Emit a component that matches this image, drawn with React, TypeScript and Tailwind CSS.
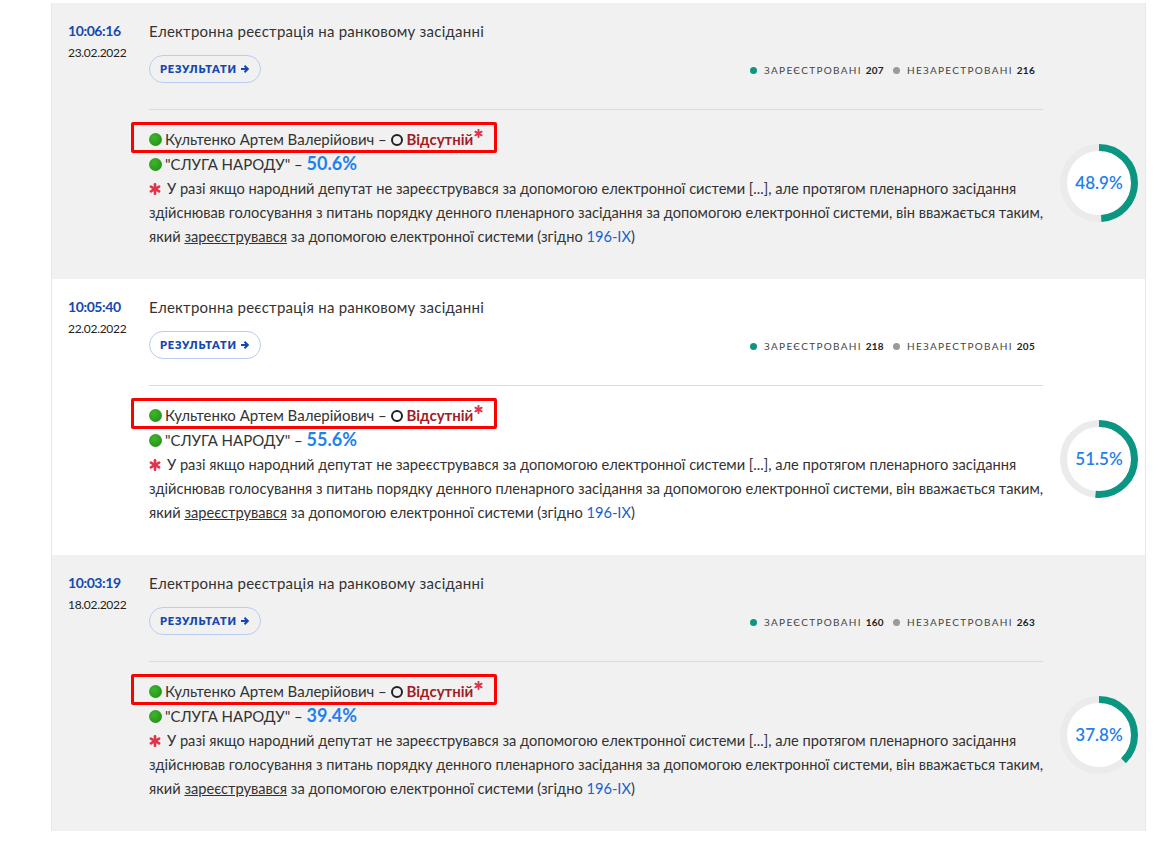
import React from "react";

interface Registration {
  time: string;
  date: string;
  registered: number;
  unregistered: number;
  partyPct: string;
  circlePct: number;
}

const rows: Registration[] = [
  { time: "10:06:16", date: "23.02.2022", registered: 207, unregistered: 216, partyPct: "50.6%", circlePct: 48.9 },
  { time: "10:05:40", date: "22.02.2022", registered: 218, unregistered: 205, partyPct: "55.6%", circlePct: 51.5 },
  { time: "10:03:19", date: "18.02.2022", registered: 160, unregistered: 263, partyPct: "39.4%", circlePct: 37.8 },
];

const GreenDot = () => (
  <span
    className="inline-block w-[13px] h-[13px] rounded-full mr-[3px] align-[-1px]"
    style={{ background: "radial-gradient(circle at 40% 35%, #3fb52c, #1d8a12)" }}
  />
);

// six-spoke red asterisk
const Star: React.FC<{ size: number; className?: string }> = ({ size, className }) => (
  <svg width={size} height={size} viewBox="0 0 12 12" className={className}>
    <g stroke="#e0344a" strokeWidth="2.6" strokeLinecap="round">
      <path d="M6 1.2v9.6" />
      <path d="M1.85 3.6l8.3 4.8" />
      <path d="M1.85 8.4l8.3-4.8" />
    </g>
  </svg>
);

// ring chart with teal progress starting at 12 o'clock
const Ring: React.FC<{ pct: number }> = ({ pct }) => {
  const r = 35.5;
  const c = 2 * Math.PI * r;
  return (
    <div className="relative w-[80px] h-[80px]">
      <svg width="80" height="80" viewBox="0 0 80 80">
        <circle cx="40" cy="40" r={r} fill="#fff" stroke="#ebebeb" strokeWidth="7" />
        <circle
          cx="40"
          cy="40"
          r={r}
          fill="none"
          stroke="#0b9682"
          strokeWidth="7"
          strokeDasharray={`${(c * pct) / 100} ${c}`}
          transform="rotate(-90 40 40)"
        />
      </svg>
      <span className="absolute inset-0 flex items-center justify-center text-[17px] text-[#1f80ee] font-semibold">
        {pct}%
      </span>
    </div>
  );
};

const Row: React.FC<{ item: Registration; gray: boolean }> = ({ item, gray }) => (
  <div className={`h-[276px] flex pl-[16px] pt-[18px] ${gray ? "bg-[#f1f1f1]" : "bg-white"}`}>
    <div className="w-[81px] shrink-0">
      <div className="text-[14px] leading-[20px] font-bold text-[#1448b0] tracking-[-0.4px]">{item.time}</div>
      <div className="text-[12px] leading-[16px] mt-[4px] text-[#222] tracking-[-0.3px]">{item.date}</div>
    </div>
    <div className="flex-1">
      <div className="w-[894px]">
        <div className="text-[15px] leading-[20px] text-[#333] tracking-[0.25px]">
          Електронна реєстрація на ранковому засіданні
        </div>
        <div className="flex items-center justify-between mt-[14px]">
          <button className="h-[28px] px-[10px] rounded-full border border-[#b8cdf0] text-[11px] font-extrabold text-[#1448b0] tracking-[0.8px] flex items-center gap-[3px]">
            РЕЗУЛЬТАТИ
            <svg width="10" height="10" viewBox="0 0 10 10">
              <path d="M1 5h6.5M4.5 1.8L7.8 5 4.5 8.2" stroke="#1448b0" strokeWidth="2" fill="none" />
            </svg>
          </button>
          <div className="flex items-center text-[10px] tracking-[1.3px] text-[#444] mr-[8px] mt-[3px]">
            <span className="w-[7px] h-[7px] rounded-full bg-[#0b9682] mr-[7px]" />
            ЗАРЕЄСТРОВАНІ&nbsp;<b className="text-[#222] tracking-[0.3px]">{item.registered}</b>
            <span className="w-[7px] h-[7px] rounded-full bg-[#9a9a9a] ml-[9px] mr-[7px]" />
            НЕЗАРЕСТРОВАНІ&nbsp;<b className="text-[#222] tracking-[0.3px]">{item.unregistered}</b>
          </div>
        </div>
        <div className="h-px bg-[#dcdcdc] mt-[26px]" />
      </div>
      <div className="flex items-center">
        <div className="w-[902px] text-[#333] pt-[18px]">
          <div className="leading-[22px] text-[15px]">
            <span className="relative inline-block">
              <span className="absolute -left-[18px] -right-[14px] -top-[6px] -bottom-[3px] border-[3px] border-[#ff0000] rounded-[2px]" />
              <GreenDot />
              Культенко Артем Валерійович –{" "}
              <span className="inline-block w-[12px] h-[12px] rounded-full border-2 border-[#222] align-[-1px]" />{" "}
              <b className="text-[#a01e26]">Відсутній</b>
              <Star size={9} className="inline-block align-[7px] ml-[1px]" />
            </span>
          </div>
          <div className="leading-[25px] text-[15px] mt-[1px]">
            <GreenDot />
            "СЛУГА НАРОДУ" –&nbsp;<b className="text-[18px] text-[#1f80ee]">{item.partyPct}</b>
          </div>
          <p className="text-[14.65px] leading-[24px]">
            <Star size={12} className="inline-block align-[-1px] mr-[6px]" />
            У разі якщо народний депутат не зареєструвався за допомогою електронної системи [...], але протягом
            пленарного засідання здійснював голосування з питань порядку денного пленарного засідання за допомогою
            електронної системи, він вважається таким, який <u>зареєструвався</u> за допомогою електронної системи
            (згідно <span className="text-[#1a5fd0]">196-IX</span>)
          </p>
        </div>
        <div className="ml-[8px] mt-[6px]">
          <Ring pct={item.circlePct} />
        </div>
      </div>
    </div>
  </div>
);

export default function App() {
  return (
    <div className="min-h-[845px] bg-white" style={{ fontFamily: "Lato, 'Noto Sans', sans-serif" }}>
      <div className="ml-[51px] w-[1095px] mt-[3px] border-x border-[#e8e8e8]">
        {rows.map((r, i) => (
          <Row key={r.time} item={r} gray={i % 2 === 0} />
        ))}
      </div>
    </div>
  );
}
